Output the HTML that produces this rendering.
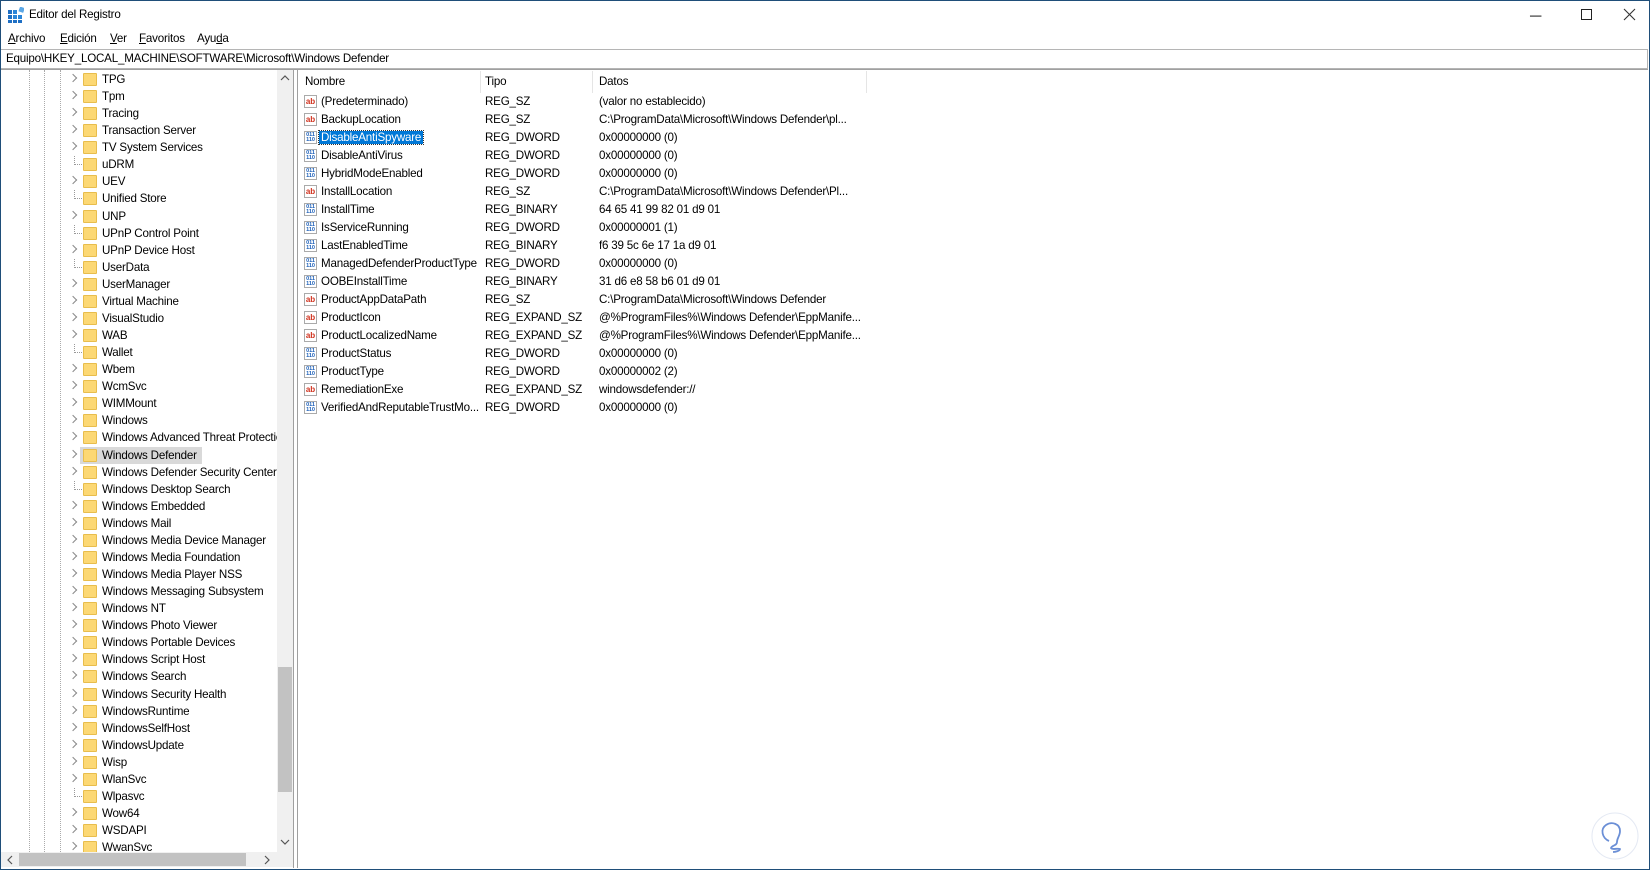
<!DOCTYPE html>
<html><head><meta charset="utf-8"><style>
*{margin:0;padding:0;box-sizing:border-box}
body{width:1650px;height:870px;overflow:hidden;background:#fff;font-family:"Liberation Sans",sans-serif;font-size:11.6px;letter-spacing:-0.2px;color:#000;position:relative}
.win{position:absolute;left:0;top:0;width:1650px;height:870px;border:1px solid #1f4e79}
.abs{position:absolute;white-space:nowrap}
.tree{position:absolute;left:1px;top:70px;width:276px;height:782px;overflow:hidden}
.row{position:absolute;left:0;height:17px;width:400px}
.row .fo{position:absolute;left:82px;top:2px;width:14px;height:13px;background:#fcd874;border:1px solid #e8bd4c;border-radius:1px}
.row .t{position:absolute;left:100px;top:1px;line-height:15px;padding:0 2px 0 1px}
.row .chev{position:absolute;left:69px;top:3px;width:6px;height:6px;border-right:1px solid #888;border-top:1px solid #888;transform:rotate(45deg);margin-top:1px}
.row .leaf{position:absolute;left:73px;top:0;height:9px;border-left:1px dotted #999}
.row .leaf2{position:absolute;left:73px;top:8px;width:8px;border-top:1px dotted #999}
.guide{position:absolute;top:70px;height:782px;border-left:1px dotted #aaa}
.rrow{position:absolute;left:298px;height:18px;width:900px}
.rrow span.c{position:absolute;top:2px;line-height:14px}
.ic{position:absolute;left:6px;top:2px;width:13px;height:13px;font-size:8px;font-weight:bold;line-height:11px;text-align:center;border:1px solid #aaa;background:#fff;letter-spacing:0}
.ab{color:#d0301c}
.bin{color:#1c5fb8;font-size:5.5px;line-height:5px;padding-top:1px}
.sel{background:#0078d7;color:#fff;outline:1px dotted #333;padding:0 2px;margin-left:-2px}
</style></head><body>
<div class="win"></div>
<svg class="abs" style="left:8px;top:7px" width="16" height="16"><rect x="0" y="3" width="4" height="4" fill="#1e6fc4"/><rect x="5" y="3" width="4" height="4" fill="#2a85d8"/><rect x="0" y="8" width="4" height="4" fill="#1e6fc4"/><rect x="5" y="8" width="4" height="4" fill="#2a85d8"/><rect x="0" y="13" width="4" height="3" fill="#1e6fc4"/><rect x="5" y="13" width="4" height="3" fill="#1e6fc4"/><rect x="10" y="8" width="4" height="4" fill="#2a85d8"/><rect x="10" y="13" width="4" height="3" fill="#1e6fc4"/><rect x="11" y="0" width="5" height="5" fill="#5aa7e6" transform="rotate(20 13 3)"/></svg>
<div class="abs" style="left:29px;top:8px">Editor del Registro</div>
<div class="abs" style="left:1530px;top:8px;font-size:16px;color:#333">─</div>
<div class="abs" style="left:1581px;top:9px;width:11px;height:11px;border:1px solid #222"></div>
<svg class="abs" style="left:1623px;top:8px" width="13" height="13"><path d="M1 1L12 12M12 1L1 12" stroke="#333" stroke-width="1.1"/></svg>
<div class="abs" style="left:8px;top:32px"><u>A</u>rchivo</div>
<div class="abs" style="left:60px;top:32px"><u>E</u>dición</div>
<div class="abs" style="left:110px;top:32px"><u>V</u>er</div>
<div class="abs" style="left:139px;top:32px"><u>F</u>avoritos</div>
<div class="abs" style="left:197px;top:32px">Ayu<u>d</u>a</div>
<div class="abs" style="left:1px;top:49px;width:1647px;height:20px;border:1px solid #b5b5b5;border-left:none;background:#fff"></div>
<div class="abs" style="left:6px;top:52px">Equipo\HKEY_LOCAL_MACHINE\SOFTWARE\Microsoft\Windows Defender</div>
<div class="abs" style="left:1px;top:69px;width:1647px;height:1px;background:#a0a0a0"></div>
<div class="abs" style="left:293px;top:70px;width:1px;height:798px;background:#a0a0a0"></div>
<div class="abs" style="left:297px;top:70px;width:1px;height:798px;background:#a0a0a0"></div>
<div class="guide" style="left:29px"></div><div class="guide" style="left:44px"></div><div class="guide" style="left:60px"></div>
<div class="tree" id="tree"></div>
<div class="abs" style="left:277px;top:70px;width:16px;height:782px;background:#f0f0f0"></div>
<div class="abs" style="left:278px;top:667px;width:14px;height:125px;background:#c2c2c2"></div>
<svg class="abs" style="left:279px;top:74px" width="12" height="8"><path d="M2 6L6 2L10 6" stroke="#555" fill="none" stroke-width="1.2"/></svg>
<svg class="abs" style="left:279px;top:838px" width="12" height="8"><path d="M2 2L6 6L10 2" stroke="#555" fill="none" stroke-width="1.2"/></svg>
<div class="abs" style="left:1px;top:852px;width:292px;height:15px;background:#f0f0f0"></div>
<div class="abs" style="left:19px;top:853px;width:227px;height:13px;background:#c2c2c2"></div>
<svg class="abs" style="left:6px;top:854px" width="8" height="12"><path d="M6 2L2 6L6 10" stroke="#555" fill="none" stroke-width="1.2"/></svg>
<svg class="abs" style="left:263px;top:854px" width="8" height="12"><path d="M2 2L6 6L2 10" stroke="#555" fill="none" stroke-width="1.2"/></svg>
<div class="abs" style="left:305px;top:75px">Nombre</div>
<div class="abs" style="left:485px;top:75px">Tipo</div>
<div class="abs" style="left:599px;top:75px">Datos</div>
<div class="abs" style="left:480px;top:71px;width:1px;height:22px;background:#e5e5e5"></div>
<div class="abs" style="left:592px;top:71px;width:1px;height:22px;background:#e5e5e5"></div>
<div class="abs" style="left:866px;top:71px;width:1px;height:22px;background:#e5e5e5"></div>
<div id="right"></div>
<svg class="abs" style="left:1590px;top:811px" width="50" height="50"><circle cx="25" cy="25" r="23" fill="#fff" stroke="#e4e9f3"/><path d="M19 30C12 27 10 18 16 14C22 10 30 13 30 20C30 25 27 27 27 31C27 35 22 34 21 37C22 39 28 37 30 38C30 40 25 41 23 41" fill="none" stroke="#6b8fd6" stroke-width="1.8"/></svg>
<script>
var items=["TPG","Tpm","Tracing","Transaction Server","TV System Services","*uDRM","UEV","*Unified Store","UNP","*UPnP Control Point","UPnP Device Host","*UserData","UserManager","Virtual Machine","VisualStudio","WAB","*Wallet","Wbem","WcmSvc","WIMMount","Windows","Windows Advanced Threat Protection","Windows Defender","Windows Defender Security Center","*Windows Desktop Search","Windows Embedded","Windows Mail","Windows Media Device Manager","Windows Media Foundation","Windows Media Player NSS","Windows Messaging Subsystem","Windows NT","Windows Photo Viewer","Windows Portable Devices","Windows Script Host","Windows Search","Windows Security Health","WindowsRuntime","WindowsSelfHost","WindowsUpdate","Wisp","WlanSvc","*Wlpasvc","Wow64","WSDAPI","WwanSvc"];
var h="";
items.forEach(function(s,i){var y=i*17.07+1;var leaf=s[0]=="*";if(leaf)s=s.slice(1);
var sel=s=="Windows Defender";
h+='<div class="row" style="top:'+y+'px">'+(sel?'<div style="position:absolute;left:79px;top:0;width:122px;height:17px;background:#d9d9d9"></div>':'')+(leaf?'<div class="leaf"></div><div class="leaf2"></div>':'<div class="chev"></div>')+'<div class="fo"></div><div class="t">'+s+'</div></div>';});
document.getElementById("tree").innerHTML=h;
var r=[["a","(Predeterminado)","REG_SZ","(valor no establecido)"],["a","BackupLocation","REG_SZ","C:\\ProgramData\\Microsoft\\Windows Defender\\pl..."],["b","DisableAntiSpyware","REG_DWORD","0x00000000 (0)"],["b","DisableAntiVirus","REG_DWORD","0x00000000 (0)"],["b","HybridModeEnabled","REG_DWORD","0x00000000 (0)"],["a","InstallLocation","REG_SZ","C:\\ProgramData\\Microsoft\\Windows Defender\\Pl..."],["b","InstallTime","REG_BINARY","64 65 41 99 82 01 d9 01"],["b","IsServiceRunning","REG_DWORD","0x00000001 (1)"],["b","LastEnabledTime","REG_BINARY","f6 39 5c 6e 17 1a d9 01"],["b","ManagedDefenderProductType","REG_DWORD","0x00000000 (0)"],["b","OOBEInstallTime","REG_BINARY","31 d6 e8 58 b6 01 d9 01"],["a","ProductAppDataPath","REG_SZ","C:\\ProgramData\\Microsoft\\Windows Defender"],["a","ProductIcon","REG_EXPAND_SZ","@%ProgramFiles%\\Windows Defender\\EppManife..."],["a","ProductLocalizedName","REG_EXPAND_SZ","@%ProgramFiles%\\Windows Defender\\EppManife..."],["b","ProductStatus","REG_DWORD","0x00000000 (0)"],["b","ProductType","REG_DWORD","0x00000002 (2)"],["a","RemediationExe","REG_EXPAND_SZ","windowsdefender://"],["b","VerifiedAndReputableTrustMo...","REG_DWORD","0x00000000 (0)"]];
h="";
r.forEach(function(e,i){var y=93+i*18;var sel=i==2;
h+='<div class="rrow" style="top:'+y+'px"><div class="ic '+(e[0]=="a"?"ab":"bin")+'">'+(e[0]=="a"?"ab":"011<br>110")+'</div><span class="c" style="left:23px"><span class="'+(sel?'sel':'')+'">'+e[1]+'</span></span><span class="c" style="left:187px">'+e[2]+'</span><span class="c" style="left:301px">'+e[3]+'</span></div>';});
document.getElementById("right").innerHTML=h;
</script>
</body></html>
